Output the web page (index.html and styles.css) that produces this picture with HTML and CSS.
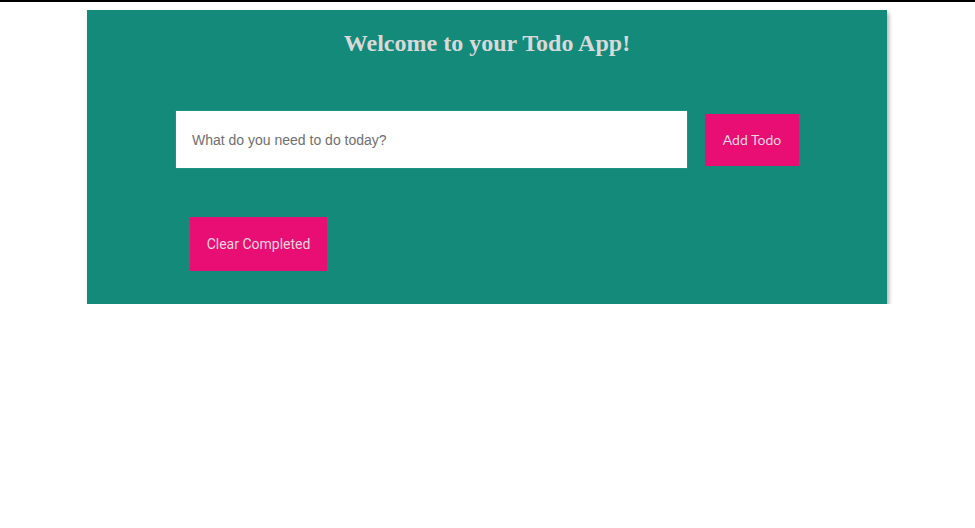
FILE: index.html
```html
<!DOCTYPE html>
<html>
<head>
<meta charset="utf-8">
<link rel="stylesheet" href="styles.css">
</head>
<body>
<div class="topline"></div>
<main class="app">
  <h1 class="title">Welcome to your Todo App!</h1>
  <form class="add-row">
    <input class="todo-input" type="text" placeholder="What do you need to do today?">
    <button type="button" class="btn add-btn">Add Todo</button>
  </form>
  <div class="list-area">
    <button type="button" class="btn clear-btn">Clear Completed</button>
  </div>
</main>
</body>
</html>
```
FILE: styles.css
```css
html, body {
  margin: 0;
  padding: 0;
  background: #fff;
}
.topline {
  height: 2px;
  background: #000;
}
.app {
  width: 800px;
  margin: 8px 0 0 calc(50% - 400.5px);
  background: #148a7a;
  box-shadow: 2px 3px 4px rgba(0,0,0,0.3);
  padding: 19px 0 33px;
  box-sizing: border-box;
}
.title {
  margin: 0;
  text-align: center;
  font-family: "Liberation Serif", serif;
  font-weight: bold;
  font-size: 24px;
  line-height: 28px;
  color: #d9d9d9;
}
.add-row {
  display: flex;
  align-items: center;
  gap: 17px;
  padding: 0 88px;
  margin: 53px 0 0;
}
.todo-input {
  flex: 1;
  height: 59px;
  box-sizing: border-box;
  border: 1px solid #1a9484;
  background: #fff;
  padding: 0 16px;
  font-family: "Liberation Sans", Arial, sans-serif;
  font-size: 14px;
  color: #555;
  outline: none;
}
.todo-input::placeholder {
  color: #707070;
}
.btn {
  border: none;
  background: #e80e73;
  color: #efd4df;
  font-size: 14px;
  cursor: pointer;
  padding: 0;
}
.add-btn {
  width: 94px;
  height: 52px;
  font-family: Lato, sans-serif;
}
.list-area {
  padding: 48px 0 0 103px;
}
.clear-btn {
  width: 137px;
  height: 54px;
  font-family: Roboto, sans-serif;
  display: block;
}
```
